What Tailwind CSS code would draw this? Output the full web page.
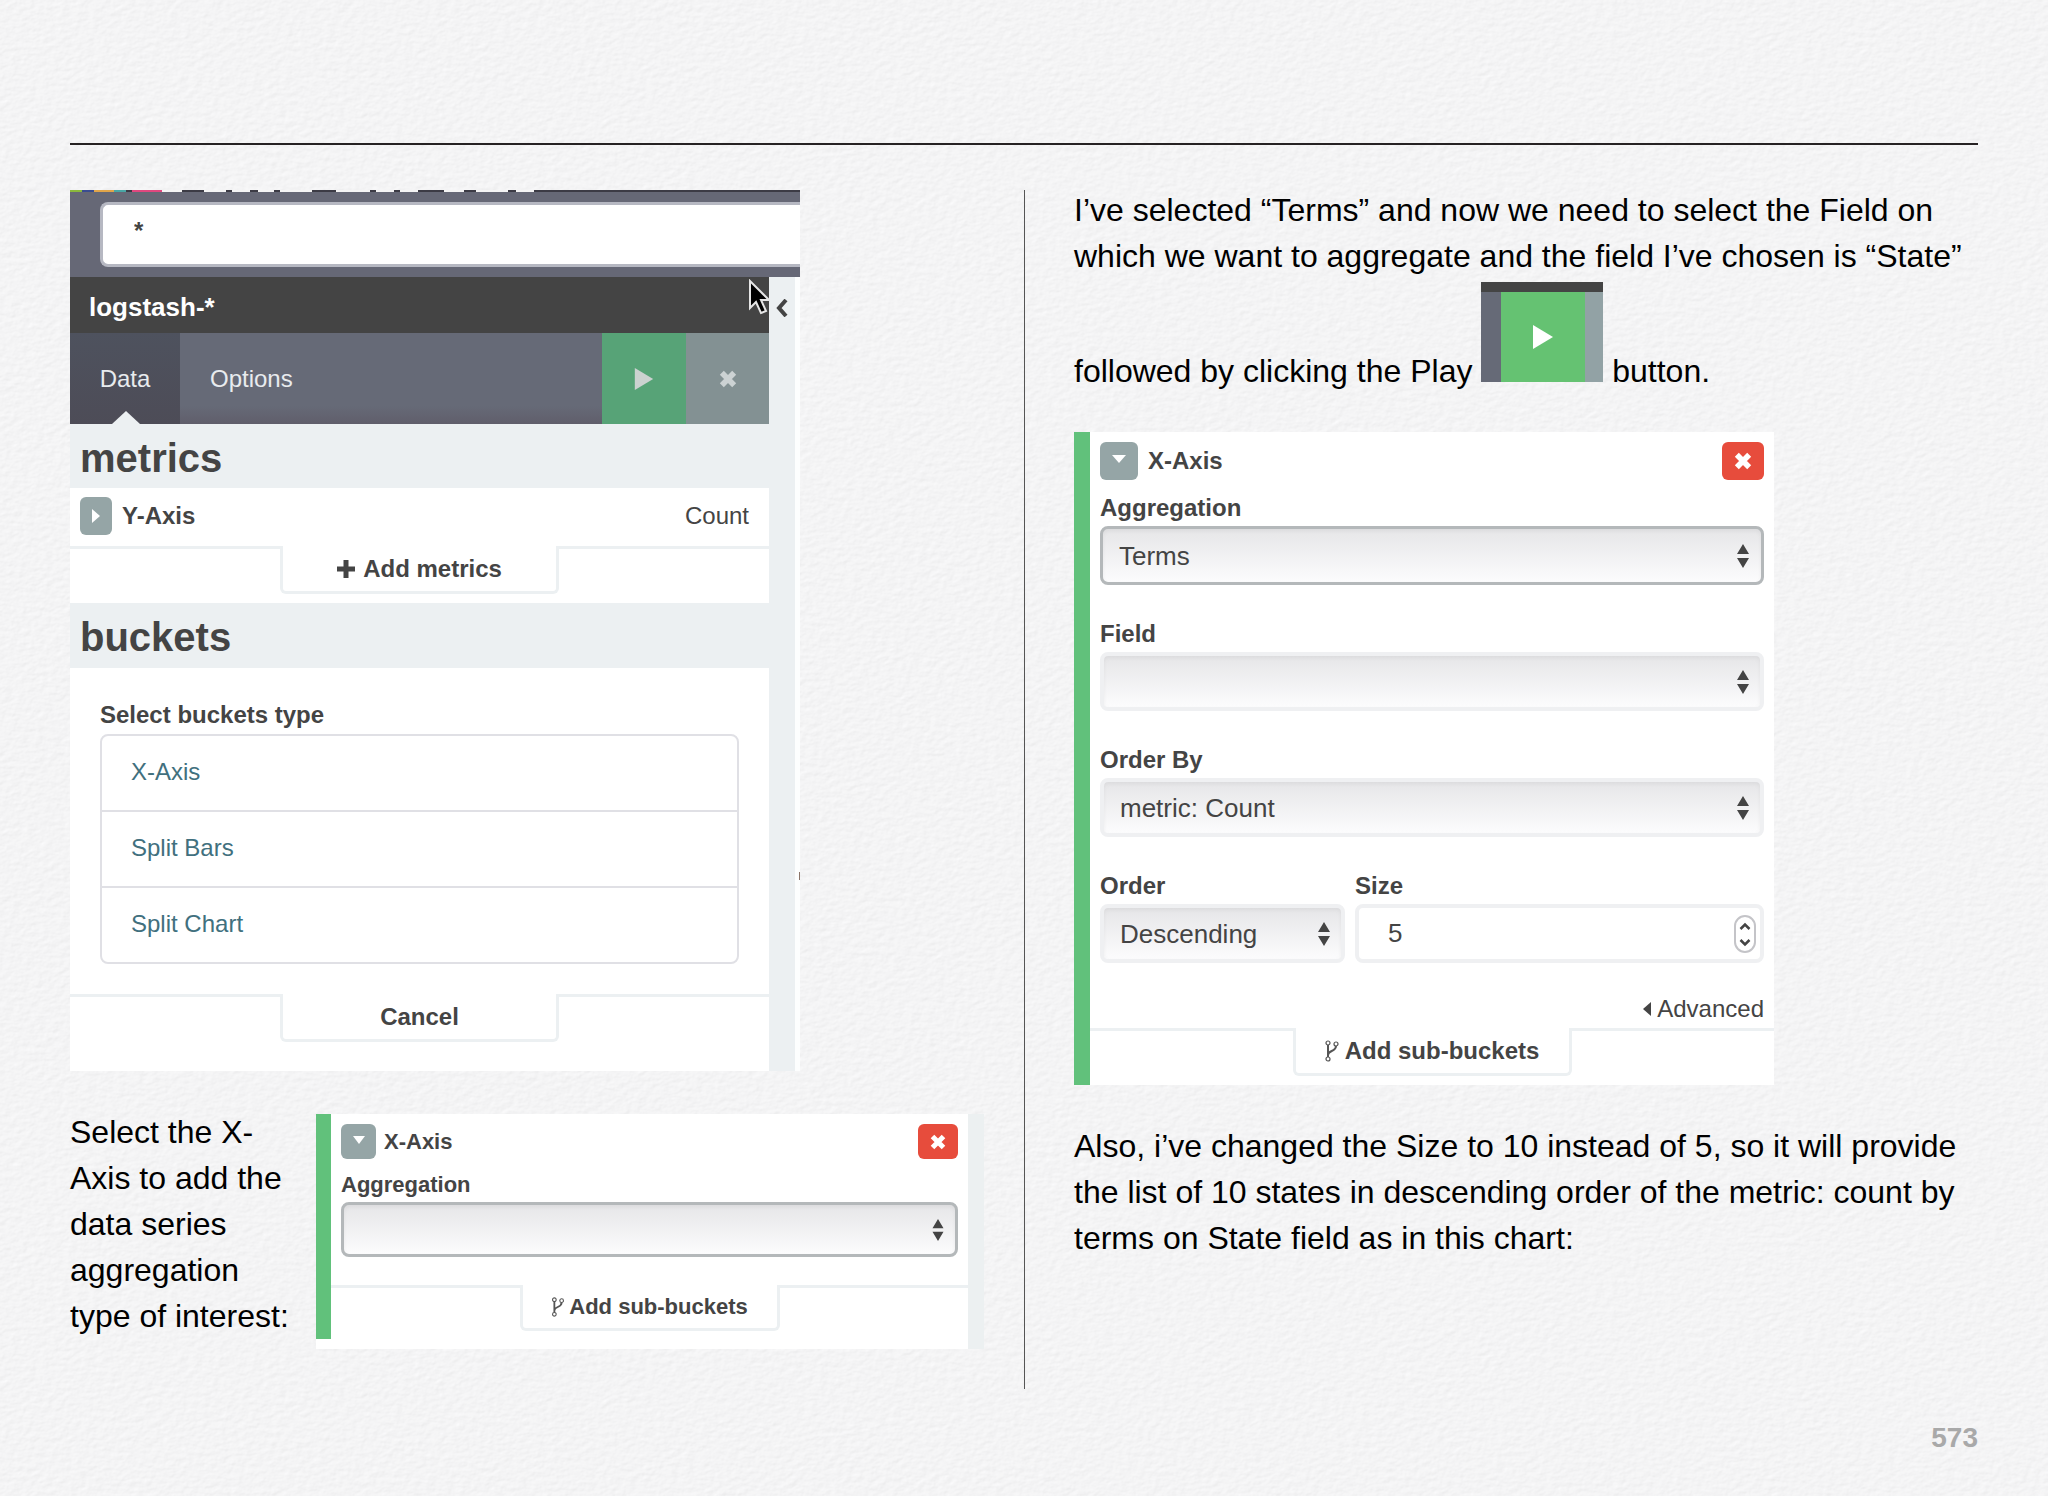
<!doctype html>
<html lang="en">
  <head>
    <meta charset="utf-8" />
    <title>Kibana aggregations - 573</title>
    <meta name="viewport" content="width=device-width, initial-scale=1" />
    <script src="https://cdn.jsdelivr.net/npm/@tailwindcss/browser@4"></script>
  </head>
  <body class="bg-[#f4f4f5] font-['Liberation_Sans',Arial,sans-serif] text-black">
    <!-- Icons -->
    <svg class="hidden">
      <symbol id="updown" viewBox="0 0 12 24">
        <path d="M6 0l6 10H0zM6 24l6-10H0z" fill="#444" />
      </symbol>
      <symbol id="times" viewBox="0 0 16 16">
        <path d="M2.500 2.500l11 11M13.500 2.500l-11 11" stroke="currentColor" stroke-width="5" />
      </symbol>
      <symbol id="play" viewBox="0 0 20 24">
        <path d="M0 0l20 12L0 24z" fill="currentColor" />
      </symbol>
      <symbol id="fork" viewBox="0 0 14 22">
        <g fill="none" stroke="#555" stroke-width="1.200">
          <circle cx="3" cy="3" r="2" />
          <circle cx="11" cy="4" r="2" />
          <circle cx="3" cy="19" r="2" />
        </g>
        <path d="M3 5v12M11 6c0 6-8 4-8 9" fill="none" stroke="#555" stroke-width="2" />
      </symbol>
    </svg>

    <div class="relative isolate flex min-h-screen flex-col">
      <!-- Paper texture -->
      <svg class="absolute inset-0 -z-10 h-full w-full" aria-hidden="true">
        <filter id="paper" x="0" y="0" width="100%" height="100%">
          <feTurbulence type="fractalNoise" baseFrequency="0.12 0.2" numOctaves="4" seed="4" />
          <feDiffuseLighting lighting-color="#f4f4f5" surfaceScale="0.3" diffuseConstant="1.14">
            <feDistantLight azimuth="225" elevation="61" />
          </feDiffuseLighting>
        </filter>
        <rect width="100%" height="100%" filter="url(#paper)" />
      </svg>

      <header class="mx-[70px] mt-[143px] border-b-2 border-[#262223]"></header>

      <main class="mt-[41px] grid grid-cols-2">
        <!-- Left column -->
        <section class="pl-[70px]">
          <div class="relative mt-1 w-[730px] max-w-full bg-[#ecf0f2] text-2xl text-[#444]">
            <div class="bg-[#666876]">
              <svg class="block h-[2px] w-full" viewBox="0 0 730 2" preserveAspectRatio="none">
                <path d="M0 0h730v2H0z" fill="#3c3b45" />
                <path d="M0 0h12v2H0z" fill="#8bb83c" />
                <path d="M12 0h12v2H12z" fill="#3a4d8f" />
                <path d="M24 0h20v2H24z" fill="#e0a54a" />
                <path d="M44 0h12v2H44z" fill="#4aa6a5" />
                <path d="M62 0h30v2H62z" fill="#e0487f" />
                <path d="M92 0h20v2H92zM134 0h22v2h-22zM162 0h18v2h-18zM188 0h16v2h-16zM210 0h32v2h-32zM266 0h34v2h-34zM306 0h18v2h-18zM330 0h18v2h-18zM374 0h20v2h-20zM406 0h32v2h-32zM446 0h18v2h-18z" fill="#f4f4f4" />
              </svg>
              <div class="pt-[10px] pb-[10px] pl-[30px]">
                <input
                  type="text"
                  aria-label="Query"
                  value="*"
                  class="block h-[65px] w-full rounded-l-lg border-y-3 border-l-3 border-[#b6b8c2] bg-white pb-2 pl-[31px] text-2xl font-bold text-[#444]"
                />
              </div>
            </div>

            <div class="mr-[5px] bg-[#ecf0f2] pr-[26px]">
              <div class="flex h-14 items-center bg-[#444] pt-1 pl-[19px] text-[26px] font-bold text-white">logstash-*</div>
              <nav class="flex h-[91px] bg-linear-to-b from-[#666a77] from-80% to-[#605e6b] text-[#e8ebee]">
                <button class="relative w-[110px] bg-linear-to-b from-[#4e525e] to-[#4d4c57]">
                  Data
                  <svg class="absolute bottom-0 left-[42px] h-[13px] w-7" viewBox="0 0 28 13">
                    <path d="M0 13L14 0l14 13z" fill="#ecf0f2" />
                  </svg>
                </button>
                <button class="pl-[30px]">Options</button>
                <button class="ml-auto flex w-[84px] items-center justify-center bg-[#57a377] text-[#ccd2d0]" aria-label="Apply">
                  <svg class="h-[22px] w-5"><use href="#play" /></svg>
                </button>
                <button class="flex w-[83px] items-center justify-center bg-[#839193] text-[#ccd2d3]" aria-label="Discard">
                  <svg class="h-[18px] w-[18px]"><use href="#times" /></svg>
                </button>
              </nav>

              <h2 class="h-16 pl-[10px] text-[40px] leading-[68px] font-bold">metrics</h2>
              <div class="bg-white">
                <div class="flex h-[58px] items-center pr-5 pb-[2px] pl-[10px]">
                  <button class="flex h-[38px] w-8 items-center justify-center rounded-md bg-[#95a5a6]" aria-label="Expand">
                    <svg class="h-[14px] w-2 text-white" viewBox="0 0 8 14"><path d="M0 0l8 7-8 7z" fill="currentColor" /></svg>
                  </button>
                  <span class="ml-[10px] font-bold">Y-Axis</span>
                  <span class="ml-auto">Count</span>
                </div>
                <div class="flex h-[57px]">
                  <div class="flex-1 border-t-3 border-[#ecf0f2]"></div>
                  <button class="flex h-12 w-[279px] items-center justify-center gap-2 rounded-b-md border-x-3 border-b-3 border-[#ecf0f2] font-bold">
                    <svg class="h-[18px] w-[18px]" viewBox="0 0 18 18"><path d="M9 0v18M0 9h18" stroke="#444" stroke-width="5" /></svg>
                    Add metrics
                  </button>
                  <div class="flex-1 border-t-3 border-[#ecf0f2]"></div>
                </div>
              </div>

              <h2 class="h-[65px] pl-[10px] text-[40px] leading-[68px] font-bold">buckets</h2>
              <div class="bg-white">
                <div class="px-[30px] pt-[31px] pb-[30px]">
                  <h3 class="font-bold">Select buckets type</h3>
                  <ul class="mt-[3px] divide-y-2 divide-[#e0e0e5] rounded-lg border-2 border-[#e0e0e5] text-[#41707e]">
                    <li class="flex h-[76px] items-center pb-[2px] pl-[29px]"><a href="#">X-Axis</a></li>
                    <li class="flex h-[76px] items-center pb-[2px] pl-[29px]"><a href="#">Split Bars</a></li>
                    <li class="flex h-[74px] items-center pb-[2px] pl-[29px]"><a href="#">Split Chart</a></li>
                  </ul>
                </div>
                <div class="flex h-[77px]">
                  <div class="flex-1 border-t-3 border-[#ecf0f2]"></div>
                  <button class="h-12 w-[279px] rounded-b-md border-x-3 border-b-3 border-[#ecf0f2] font-bold">Cancel</button>
                  <div class="flex-1 border-t-3 border-[#ecf0f2]"></div>
                </div>
              </div>
            </div>

            <div class="absolute top-[87px] right-0 bottom-0 w-[5px] bg-white/90"></div>
            <svg class="absolute top-[109px] right-3 h-[18px] w-3" viewBox="0 0 12 18">
              <path d="M10 1L3 9l7 8" fill="none" stroke="#444" stroke-width="4" />
            </svg>
            <div class="absolute top-[682px] right-0 h-2 w-px bg-[#8b7468]"></div>
            <!-- Mouse pointer -->
            <svg class="absolute top-[89px] right-[30px] h-9 w-[22px]" viewBox="0 0 22 36">
              <path d="M2 2v27l6-6 5 11 5-2-5-11h8z" fill="#000" stroke="#e6e6e6" stroke-width="2" />
            </svg>
          </div>

          <div class="mt-[38px] flex">
            <p class="w-[246px] pr-4 text-[32px] leading-[46px]">Select the X-Axis to add the data series aggregation type of interest:</p>
            <div class="mt-[5px] flex w-[668px] items-start border-r-16 border-[#ecf0f1] bg-white text-[22px] leading-6 text-[#444]">
              <div class="h-[225px] w-[15px] bg-[#61c17b]"></div>
              <div class="flex-1">
                <div class="px-[10px] pt-[10px]">
                  <div class="flex h-[35px] items-center">
                    <button class="flex h-[35px] w-[35px] items-center justify-center rounded-md bg-[#95a5a6] pb-1" aria-label="Collapse">
                      <svg class="h-2 w-3" viewBox="0 0 12 8"><path d="M0 0h12L6 8z" fill="#fff" /></svg>
                    </button>
                    <span class="ml-2 font-bold">X-Axis</span>
                    <button class="ml-auto flex h-[35px] w-10 items-center justify-center rounded-md bg-[#e74c3c] text-white" aria-label="Remove">
                      <svg class="h-4 w-4"><use href="#times" /></svg>
                    </button>
                  </div>
                  <label for="agg-new" class="mt-[14px] block font-bold">Aggregation</label>
                  <div class="relative mt-[5px]">
                    <select id="agg-new" class="block h-[55px] w-full appearance-none rounded-lg border-3 border-[#b4b8ba] bg-linear-to-b from-[#e6e6e8] to-[#fcfcfd] px-4 inset-shadow-sm">
                      <option></option>
                      <option>Terms</option>
                    </select>
                    <svg class="pointer-events-none absolute top-[17px] right-[14px] h-[22px] w-3"><use href="#updown" /></svg>
                  </div>
                </div>
                <div class="mt-7 flex h-16">
                  <div class="flex-1 border-t-3 border-[#ecf0f2]"></div>
                  <button class="flex h-[46px] w-[260px] items-center justify-center gap-1 rounded-b-md border-x-3 border-b-3 border-[#ecf0f2] font-bold">
                    <svg class="h-5 w-[14px]"><use href="#fork" /></svg>
                    Add sub-buckets
                  </button>
                  <div class="flex-1 border-t-3 border-[#ecf0f2]"></div>
                </div>
              </div>
            </div>
          </div>
        </section>

        <!-- Right column -->
        <section class="relative pr-[70px] pl-[50px]">
          <div class="absolute top-1 left-0 h-[1199px] w-px bg-[#555]"></div>
          <p class="pt-px text-[32px] leading-[46px]">
            I’ve selected “Terms” and now we need to select the Field on which we want to aggregate and the field I’ve chosen is “State” followed by clicking the Play
            <span class="mt-[3px] inline-block h-[100px] w-[122px] overflow-hidden">
              <span class="flex h-full border-t-10 border-[#444] bg-[#92a2a5]">
                <span class="w-5 bg-[#666a77]"></span>
                <button class="flex w-[84px] items-center justify-center bg-[#65c272] text-white" aria-label="Play">
                  <svg class="h-6 w-5"><use href="#play" /></svg>
                </button>
              </span>
            </span>
            button.
          </p>

          <form class="mt-[38px] w-[700px] max-w-full border-l-16 border-[#61c17b] bg-white text-2xl leading-7 text-[#444]">
            <div class="px-[10px] pt-[10px]">
              <div class="flex h-[38px] items-center">
                <button type="button" class="flex h-[38px] w-[38px] items-center justify-center rounded-md bg-[#95a5a6] pb-1" aria-label="Collapse">
                  <svg class="h-2 w-[14px]" viewBox="0 0 14 8"><path d="M0 0h14L7 8z" fill="#fff" /></svg>
                </button>
                <span class="ml-[10px] font-bold">X-Axis</span>
                <button type="button" class="ml-auto flex h-[38px] w-[42px] items-center justify-center rounded-md bg-[#e74c3c] text-white" aria-label="Remove">
                  <svg class="h-[18px] w-[18px]"><use href="#times" /></svg>
                </button>
              </div>

              <label for="agg" class="mt-[14px] block font-bold">Aggregation</label>
              <div class="relative mt-1">
                <select id="agg" class="block h-[59px] w-full appearance-none rounded-lg border-3 border-[#b4b8ba] bg-linear-to-b from-[#e6e6e8] to-[#fcfcfd] px-4 text-[26px] inset-shadow-sm">
                  <option>Terms</option>
                </select>
                <svg class="pointer-events-none absolute top-[18px] right-[15px] h-6 w-3"><use href="#updown" /></svg>
              </div>

              <label for="field" class="mt-[35px] block font-bold">Field</label>
              <div class="relative mt-1">
                <select id="field" class="block h-[59px] w-full appearance-none rounded-lg border-4 border-[#eff0f2] bg-linear-to-b from-[#e6e6e8] to-[#fcfcfd] px-4 text-[26px] inset-shadow-sm">
                  <option></option>
                  <option>State</option>
                </select>
                <svg class="pointer-events-none absolute top-[18px] right-[15px] h-6 w-3"><use href="#updown" /></svg>
              </div>

              <label for="orderby" class="mt-[35px] block font-bold">Order By</label>
              <div class="relative mt-1">
                <select id="orderby" class="block h-[59px] w-full appearance-none rounded-lg border-4 border-[#eff0f2] bg-linear-to-b from-[#e6e6e8] to-[#fcfcfd] px-4 text-[26px] inset-shadow-sm">
                  <option>metric: Count</option>
                </select>
                <svg class="pointer-events-none absolute top-[18px] right-[15px] h-6 w-3"><use href="#updown" /></svg>
              </div>

              <div class="mt-[35px] flex gap-[10px]">
                <div class="w-[245px]">
                  <label for="order" class="block font-bold">Order</label>
                  <div class="relative mt-1">
                    <select id="order" class="block h-[59px] w-full appearance-none rounded-lg border-4 border-[#eff0f2] bg-linear-to-b from-[#e6e6e8] to-[#fcfcfd] px-4 text-[26px] inset-shadow-sm">
                      <option>Descending</option>
                    </select>
                    <svg class="pointer-events-none absolute top-[18px] right-[15px] h-6 w-3"><use href="#updown" /></svg>
                  </div>
                </div>
                <div class="flex-1">
                  <label for="size" class="block font-bold">Size</label>
                  <div class="relative mt-1">
                    <input id="size" type="number" value="5" class="block h-[59px] w-full [appearance:textfield] rounded-lg border-4 border-[#eff0f2] bg-white px-[29px] text-[26px]" />
                    <svg class="pointer-events-none absolute top-[11px] right-2 h-[38px] w-[22px]" viewBox="0 0 22 38">
                      <rect x="1" y="1" width="20" height="36" rx="10" fill="#fff" stroke="#c4c4c8" stroke-width="2" />
                      <path d="M6.500 14L11 9.500l4.500 4.500M6.500 25l4.500 4.500 4.500-4.500" fill="none" stroke="#444" stroke-width="2.500" />
                    </svg>
                  </div>
                </div>
              </div>

              <a href="#" class="mt-8 flex items-center justify-end gap-[6px]">
                <svg class="h-[14px] w-2" viewBox="0 0 8 14"><path d="M8 0v14L0 7z" fill="#444" /></svg>
                Advanced
              </a>
            </div>
            <div class="mt-[5px] flex h-[57px]">
              <div class="flex-1 border-t-3 border-[#ecf0f2]"></div>
              <button type="button" class="flex h-12 w-[279px] items-center justify-center gap-[6px] rounded-b-md border-x-3 border-b-3 border-[#ecf0f2] font-bold">
                <svg class="h-[22px] w-[14px]"><use href="#fork" /></svg>
                Add sub-buckets
              </button>
              <div class="flex-1 border-t-3 border-[#ecf0f2]"></div>
            </div>
          </form>

          <p class="mt-[38px] text-[32px] leading-[46px]">
            Also, i’ve changed the Size to 10 instead of 5, so it will provide the list of 10 states in descending order of the metric: count by terms on State field as in this chart:
          </p>
        </section>
      </main>

      <footer class="mt-auto pr-[70px] pb-10 text-right text-[28px] leading-9 font-bold text-[#a9a9a9]">573</footer>
    </div>
  </body>
</html>
